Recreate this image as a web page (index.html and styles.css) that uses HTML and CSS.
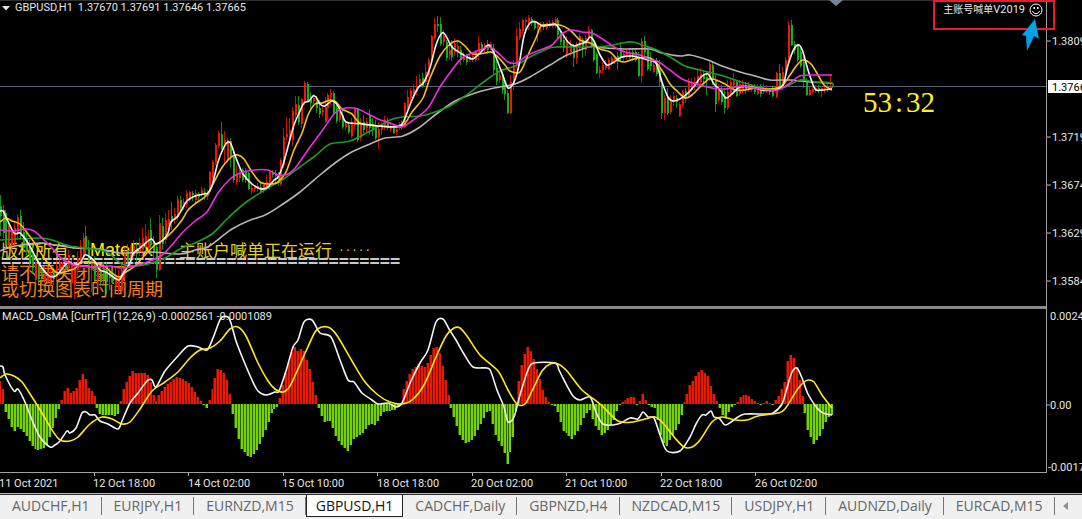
FILE: index.html
```html
<!DOCTYPE html>
<html lang="zh-CN">
<head>
<meta charset="utf-8">
<title>GBPUSD,H1</title>
<link rel="stylesheet" href="styles.css">
</head>
<body>
<div class="terminal">
  <main class="charts">
    <section class="panel panel-price">
      <svg class="plot" id="price-plot" aria-label="GBPUSD H1">
        <path class="shift-marker" d="M829 0H843L836 6Z"/>
      </svg>
      <h1 class="caption caption-price"><svg class="caret" viewBox="0 0 8 5"><path d="M0 0H8L4 4.500Z"/></svg><span>GBPUSD,H1</span><span>1.37670 1.37691 1.37646 1.37665</span></h1>
      <div class="notice">
        <p class="notice-owner"><span>版权所有：</span><b>MateFX</b><span>主账户喊单正在运行</span><span class="dots">·····</span></p>
        <p class="notice-rule">=======================================</p>
        <p class="notice-warn">请不要关闭窗口</p>
        <p class="notice-warn">或切换图表时间周期</p>
      </div>
      <p class="countdown">53<span class="colon">:</span>32</p>
    </section>
    <svg class="scale scale-price">
      <path class="tick" d="M0 41H4M0 137H4M0 185H4M0 233H4M0 281H4"/>
      <rect class="price-tag" x="1" y="80" width="60" height="13"/>
      <text x="5" y="45">1.38090</text>
      <text class="price-now" x="5" y="91">1.37665</text>
      <text x="5" y="141">1.37190</text>
      <text x="5" y="189">1.36740</text>
      <text x="5" y="237">1.36290</text>
      <text x="5" y="285">1.35840</text>
    </svg>
    <div class="divider"></div>
    <div class="divider-end"></div>
    <section class="panel panel-macd">
      <svg class="plot" id="macd-plot" aria-label="MACD"></svg>
      <h2 class="caption caption-macd">MACD_OsMA [CurrTF] (12,26,9) -0.0002561 -0.0001089</h2>
    </section>
    <svg class="scale scale-macd">
      <path class="tick" d="M0 96H3"/>
      <text x="3" y="11">0.002453</text>
      <text x="3" y="100">0.00</text>
      <text x="1" y="162">-0.001731</text>
    </svg>
    <svg class="timeline">
      <path class="tick" d="M94.500 0V3M188.500 0V3M283.500 0V3M377.500 0V3M472.500 0V3M566.500 0V3M661.500 0V3M755.500 0V3"/>
      <text x="-1" y="14">11 Oct 2021</text>
      <text x="93" y="14">12 Oct 18:00</text>
      <text x="188" y="14">14 Oct 02:00</text>
      <text x="282" y="14">15 Oct 10:00</text>
      <text x="377" y="14">18 Oct 18:00</text>
      <text x="471" y="14">20 Oct 02:00</text>
      <text x="565" y="14">21 Oct 10:00</text>
      <text x="660" y="14">22 Oct 18:00</text>
      <text x="755" y="14">26 Oct 02:00</text>
    </svg>
    <div class="expert">
      <span><span class="expert-name">主账号喊单</span>V2019</span>
      <svg class="smiley" viewBox="0 0 14 14"><circle cx="7" cy="7" r="6"/><path d="M3.500 8C4.500 11.500 9.500 11.500 10.500 8"/><path class="eyes" d="M4.500 4H6V6H4.500ZM8 4H9.500V6H8Z"/></svg>
    </div>
    <svg class="pointer" viewBox="0 0 18 33"><path d="M13 0L17 20L12 17L5 32L4 17L0 16Z"/></svg>
  </main>
  <nav class="tabs">
    <button class="tab">AUDCHF,H1</button>
    <button class="tab">EURJPY,H1</button>
    <button class="tab">EURNZD,M15</button>
    <button class="tab tab-active">GBPUSD,H1</button>
    <button class="tab">CADCHF,Daily</button>
    <button class="tab">GBPNZD,H4</button>
    <button class="tab">NZDCAD,M15</button>
    <button class="tab">USDJPY,H1</button>
    <button class="tab">AUDNZD,Daily</button>
    <button class="tab">EURCAD,M15</button>
    <button class="tab-scroll" aria-label="Scroll tabs left"><svg viewBox="0 0 5 8"><path d="M5 0V8L0 4Z"/></svg></button>
  </nav>
</div>
<script src="chart.js"></script>
</body>
</html>
```
FILE: styles.css
```css
* { box-sizing: border-box; }

body {
  margin: 0;
  background: #000;
  color: #e6e6e6;
  font: 11px/14px Roboto, "Noto Sans CJK SC", sans-serif;
}

h1, h2, p { margin: 0; font-weight: 400; }

.terminal {
  display: flex;
  flex-direction: column;
  height: 100vh;
  overflow: hidden;
}

.charts {
  position: relative;
  flex: 1;
  min-height: 0;
  display: grid;
  grid-template-columns: minmax(0, 1fr) 36px;
  grid-template-rows: minmax(0, 306fr) 3px minmax(0, 164fr) 20px;
  border-bottom: 1px solid #b4b4b4;
}

.panel { position: relative; overflow: hidden; }
.panel-price { box-shadow: inset 0 1px 0 #303030; }
.panel-macd { border-bottom: 1px solid #a0a0a0; }

.plot { display: block; position: relative; z-index: 1; width: 100%; height: 100%; }

.scale {
  display: block;
  width: 100%;
  height: 100%;
  overflow: hidden;
  border-left: 1px solid #a0a0a0;
}

.divider { background: #8c878c; }
.divider-end { border-left: 1px solid #a0a0a0; }

.timeline { grid-column: 1 / -1; width: 100%; height: 20px; }

text { fill: #e6e6e6; }
.tick { stroke: #b4b4b4; fill: none; }
.price-tag { fill: #fff; }
.price-now { fill: #000; }
.shift-marker { fill: #76869a; }

.caption {
  position: absolute;
  left: 2px;
  font-size: 11px;
  line-height: 14px;
  white-space: pre;
}
.caption-price { top: 1px; display: flex; align-items: center; gap: 5px; }
.caption-macd { top: 1px; }
.caret { width: 8px; height: 5px; fill: #e6e6e6; }

.notice {
  position: absolute;
  left: 1px;
  bottom: 10px;
  font: 17px/16px "Noto Sans CJK SC", sans-serif;
  font-weight: 300;
  white-space: nowrap;
}
.notice-owner { display: flex; align-items: center; color: #e8d020; }
.notice-owner b {
  margin: 0 26px 0 4px;
  font: 18px/16px "Liberation Sans", Arial, sans-serif;
  color: #ffee00;
}
.dots { margin-left: 6px; font: 11px/16px "Liberation Mono", monospace; }
.notice-rule {
  height: 6px;
  font: bold 17px/6px "DejaVu Sans Mono", monospace;
  color: #c8c8c8;
}
.notice-warn { color: #f08020; font-size: 18px; }

.countdown {
  position: absolute;
  left: 863px;
  top: 86px;
  font: 29px/32px "Liberation Serif", serif;
  color: #ffee22;
}
.colon { display: inline-block; width: 14px; text-align: center; }

.expert {
  position: absolute;
  top: 0;
  right: 27px;
  display: flex;
  align-items: flex-start;
  gap: 4px;
  height: 30px;
  padding: 1px 10px 0 8px;
  border: 2px solid #ed1c24;
}
.expert-name { font-size: 10px; }
.smiley { width: 14px; height: 14px; fill: none; stroke: #fff; }
.smiley .eyes { fill: #fff; stroke: none; }

.pointer { position: absolute; right: 42px; top: 19px; width: 18px; height: 33px; fill: #00a2e8; }

.tabs {
  display: flex;
  height: 25px;
  padding-bottom: 2px;
  background: #f0f0f0;
  border-top: 1px solid #303030;
  overflow: hidden;
}
.tab, .tab-scroll {
  position: relative;
  flex: none;
  margin: 0;
  border: 0;
  padding: 0 12px;
  background: none;
  color: #666;
  font: 14px/20px "Open Sans", sans-serif;
}
.tab::after {
  content: "";
  position: absolute;
  right: 0;
  top: 2px;
  width: 1px;
  height: 18px;
  background: #777;
}
.tab-active { background: #fff; color: #111; border: 1px solid #222; border-top: 0; padding: 0 9px; }
.tab-active::after { display: none; }
.tab-scroll { padding: 0 8px; }
.tab-scroll svg { display: block; width: 5px; height: 8px; fill: #909090; }

.level { stroke: #56637a; }
.candle-up { stroke: #f01800; fill: #f01800; }
.candle-down { stroke: #18b018; fill: #18b018; }
.body { stroke: none; }
.wick { stroke-width: 1; opacity: 0.8; }
.bar-up { fill: #e81a00; }
.bar-down { fill: #76d200; }
.gap-up { fill: #7c0c00; }
.gap-down { fill: #2c6400; }
.line { fill: none; stroke-width: 1.6; stroke-linejoin: round; }
.line-fast { stroke: #f4f4f4; }
.line-gold { stroke: #f8c018; }
.line-magenta { stroke: #f02ce0; }
.line-green { stroke: #229a22; }
.line-silver { stroke: #b8b4b4; }
.line-signal { stroke: #ffe818; }
```
FILE: chart.js
```javascript
const NS = "http://www.w3.org/2000/svg";

function add(parent, name, attrs) {
  const el = document.createElementNS(NS, name);
  for (const key in attrs) el.setAttribute(key, attrs[key]);
  parent.appendChild(el);
}

// Smooth curve through a list of "x,y" points.
function curve(parent, cls, text) {
  const p = text.trim().split(/\s+/).map(s => s.split(",").map(Number));
  let d = "M" + p[0].join(" ");
  for (let i = 1; i < p.length; i++) {
    const a = p[Math.max(i - 2, 0)], b = p[i - 1], c = p[i], e = p[Math.min(i + 1, p.length - 1)];
    d += `C${b[0] + (c[0] - a[0]) / 7} ${b[1] + (c[1] - a[1]) / 7} ${c[0] - (e[0] - b[0]) / 7} ${c[1] - (e[1] - b[1]) / 7} ${c[0]} ${c[1]}`;
  }
  add(parent, "path", { class: "line " + cls, d });
}

const price = document.getElementById("price-plot");
add(price, "path", { class: "level", d: "M0 86.5H4000" });

// x, high, body top, body bottom, low; "g" marks a falling bar.
const candles = `0,195,206,216,236g 3,205,210,233,238g 5,210,213,245,248g 8,223,226,245,249 11,228,231,245,250 14,222,228,243,246 17,214,217,233,240 20,210,216,236,240g 23,222,232,248,252g 26,232,238,250,255g 29,240,247,262,268g 32,245,255,268,274g 35,255,262,280,283 38,258,265,279,284g 41,265,270,276,285g 44,266,270,280,283 47,268,272,282,284 50,270,274,280,286 53,268,272,279,285g 56,260,266,277,280 59,258,262,272,276 62,262,265,270,274 65,258,262,270,276g 68,250,255,268,272 71,260,265,283,290 74,265,270,285,299 77,252,258,270,276 80,240,246,262,268 83,233,238,255,260 85,226,236,247,255g 88,240,250,262,268g 91,255,258,270,292 94,256,262,275,280g 97,262,268,280,288 100,265,270,282,286g 103,262,270,280,284g 106,262,270,282,294g 109,268,272,278,290g 112,270,276,281,284g 115,268,275,286,290 118,270,278,290,294 121,262,270,291,294 124,248,255,272,280 127,244,250,262,266g 130,245,252,260,266 133,240,246,256,260 136,242,248,254,262g 139,238,243,252,256 142,228,238,250,256 145,224,236,246,252 148,230,240,248,254 150,218,230,245,255g 153,236,242,252,258g 156,244,247,270,278g 159,215,223,270,271 162,218,226,244,250g 165,213,220,240,244 168,210,219,226,232 171,202,216,222,230g 174,208,214,220,224 177,196,199,217,221 180,196,200,208,212g 183,198,202,207,210 186,190,193,204,208 189,191,192,200,202 192,191,193,195,201g 195,190,193,200,203 198,192,194,197,200g 201,187,190,194,197 204,188,192,196,200g 207,190,193,196,200 209,171,172,192,195 212,160,162,178,180 215,143,145,163,165 218,131,133,146,148 221,122,134,149,150g 224,131,140,144,165 227,138,140,160,162 230,138,141,157,167g 233,148,157,180,183g 236,165,174,182,185 239,168,173,178,182 242,168,170,180,182g 245,168,172,180,183g 248,172,173,189,190g 251,182,188,191,194 254,185,187,189,192 257,183,186,189,192 260,182,187,193,194g 263,183,184,190,193 266,175,182,187,190 269,170,172,185,190 272,170,172,175,178g 275,170,173,176,185g 278,172,176,183,186g 280,158,160,184,186 283,128,137,165,168 286,117,134,137,140 289,118,130,138,142 292,107,111,140,146 295,96,104,115,118 298,96,105,122,125g 301,98,99,124,128 304,81,83,103,105 307,82,84,100,102g 310,92,97,103,110g 313,94,98,101,104 316,96,101,108,113g 319,100,108,114,118g 322,105,110,112,116 325,97,107,122,123 327,93,95,108,120 330,89,93,97,105 333,91,93,113,115g 336,105,108,121,123g 339,110,112,120,122 342,108,115,127,129g 345,122,124,127,130 348,122,125,132,134g 351,118,122,136,138 354,107,108,125,130 357,108,109,140,142g 360,118,124,138,141 363,115,122,130,134g 366,118,122,128,132 369,109,115,128,135g 372,118,124,130,136g 375,120,126,138,140g 378,122,129,137,149 381,122,125,130,135 384,116,120,127,130 387,118,123,127,130g 390,122,126,129,132 393,124,128,133,134g 396,126,129,132,135 399,122,125,128,130 401,120,122,127,130 404,102,103,125,128 407,90,97,107,112 410,88,91,98,105 413,84,89,94,97 416,76,86,92,95 419,74,79,84,87 422,73,78,86,88g 425,64,72,82,85 428,58,60,75,78 431,35,36,60,62 434,18,24,38,40 437,16,24,26,32g 440,17,24,44,46g 443,30,36,42,46 446,40,42,58,61g 449,45,50,55,60 451,40,45,57,61g 454,38,44,52,56 457,40,46,51,58 460,46,50,60,65g 463,52,56,60,62 466,54,58,62,65g 469,55,57,60,62 472,52,56,60,62 475,50,52,60,62 478,36,43,52,60 481,42,44,50,52g 484,43,45,49,52 487,40,45,50,54g 490,42,44,48,50 493,44,48,70,74g 496,60,68,81,85g 499,72,75,80,83 502,70,74,90,94g 504,80,86,94,100g 507,90,93,113,114g 510,75,82,113,114 513,60,65,85,90 516,28,36,65,68 519,22,29,38,40 522,19,20,31,34 525,18,20,22,30 528,15,18,24,30 531,17,19,22,26g 534,20,22,28,30g 537,22,24,28,42 540,22,25,27,32 543,22,24,27,30g 546,22,23,28,30 549,20,23,26,28 552,20,22,26,28 555,17,19,24,28 557,18,20,35,38g 560,30,34,42,45g 563,35,40,48,52g 566,36,42,54,58 570,40,44,52,56 573,44,48,58,67g 576,42,46,58,64 579,33,36,46,50 582,38,40,48,58g 585,35,38,50,56 588,26,30,38,42 591,29,30,45,48g 593,40,43,60,62g 596,52,54,73,74g 599,66,70,73,78 602,62,65,70,73 605,60,64,68,70 608,58,60,69,70 611,56,58,63,66 614,56,58,61,64 617,52,56,62,70g 620,42,48,58,62g 623,50,54,58,61 626,50,53,56,60 629,48,54,58,60 632,48,52,57,61g 635,50,52,60,62g 638,52,57,76,77g 641,38,41,76,83 644,36,41,52,58g 647,46,50,69,71g 650,52,60,66,71g 653,60,65,72,73 656,58,63,74,76g 659,60,68,82,86g 661,78,84,113,119g 664,95,98,113,120 667,88,98,113,115g 670,95,102,112,114 673,92,96,102,106 676,95,98,102,108g 679,102,104,116,117 682,90,92,105,107 685,88,91,98,103g 688,78,82,95,98 691,78,82,90,92 694,77,82,87,90 697,70,76,84,88 700,68,74,82,86 703,70,74,79,84g 706,72,77,80,95g 709,60,64,78,81 712,61,65,80,85g 715,75,81,104,112g 718,84,88,100,103 721,85,90,102,105g 724,88,96,108,114g 727,80,92,108,110 730,78,82,95,97 733,73,81,85,92 736,80,82,96,97g 739,80,84,94,96 742,80,84,90,93 745,82,85,89,94g 748,82,85,90,92 751,84,87,90,92 754,84,87,92,94g 757,84,88,94,95 760,84,90,94,97g 763,83,88,92,94 766,85,88,91,93 769,88,90,92,95g 772,86,90,96,97g 776,72,73,97,98 779,64,73,88,90g 782,67,72,88,90 785,57,60,72,75 788,21,25,60,62 791,20,25,45,46g 794,41,44,50,54g 797,44,46,60,62g 800,48,52,66,68g 803,56,62,82,88g 806,78,82,95,96g 809,86,90,95,96 812,87,89,92,94 815,85,88,91,93 818,85,88,90,93g 821,86,88,91,97 824,85,88,90,93 827,84,87,90,92 830,75,86,89,90`;

for (const item of candles.split(" ")) {
  const [x, high, top, bottom, low] = item.split(",").map(parseFloat);
  const cls = item.endsWith("g") ? "candle-down" : "candle-up";
  add(price, "path", { class: cls + " wick", d: `M${x + .5} ${high}V${low}` });
  add(price, "rect", { class: cls + " body", x, y: top, width: 2, height: Math.max(bottom - top, 1) });
}

curve(price, "line-silver", "0,251 15,246 40,243 55,245 75,248 100,249 120,253 150,252 180,254 195,250 208,247 220,238 232,229 248,221 265,215 280,206 300,192 320,175 335,163 350,153 370,144 385,138 403,136 420,127 435,115 455,101 475,93 490,89 505,86 515,84 530,77 550,65 565,56 580,50 593,46 605,48 625,49 650,49 662,53 680,56 690,55 708,60 722,66 740,72 755,76 770,80 790,80 810,82 832,83");
curve(price, "line-green", "0,240 40,238 55,241 70,246 100,250 110,254 122,264 135,266 148,264 165,258 180,249 195,243 212,234 228,218 245,203 268,188 285,178 300,167 315,156 330,144 350,141 372,130 390,120 402,117 420,116 432,113 450,106 468,94 485,81 500,71 515,66 530,57 545,50 555,47 590,47 608,46 622,43 633,42 645,46 657,50 670,57 685,66 700,70 720,75 738,81 755,86 770,89 785,87 800,80 815,82 832,83 832,88");
curve(price, "line-gold", "0,222 6,218 12,221 20,224 28,234 36,245 44,258 52,268 58,273 74,269 80,263 90,262 104,266 112,273 119,277 126,272 135,266 144,256 155,245 163,240 172,232 182,220 188,210 196,203 206,196 212,186 221,169 228,160 233,156 238,155 244,159 252,172 260,182 270,184 278,182 286,172 294,150 302,133 308,115 315,104 322,103 330,100 336,102 342,109 352,114 360,123 380,126 402,126 412,112 423,98 430,78 440,56 450,44 458,41 465,46 473,54 485,53 491,52 498,57 505,65 510,71 520,72 528,55 536,38 541,26 550,25 560,25 570,30 580,40 590,43 600,49 610,52 618,60 624,62 634,59 645,57 655,61 663,72 670,84 678,92 685,98 692,95 700,87 709,79 716,80 725,84 735,90 745,90 755,88 770,89 782,86 790,75 797,65 803,60 811,64 818,75 824,85 832,90");
curve(price, "line-fast", "0,211 3,211 6,217 14,233 20,233 26,240 32,250 36,258 42,268 48,275 53,277 58,274 68,262 74,265 80,263 85,255 90,257 96,263 100,270 106,272 112,276 119,280 124,272 130,263 133,254 140,248 151,239 156,244 163,240 168,233 171,222 178,216 187,201 195,196 204,194 208,193 212,186 218,162 224,147 228,142 231,144 236,158 243,174 252,184 261,189 268,187 274,180 278,177 283,165 289,143 294,125 300,111 304,103 309,101 313,96 316,97 320,104 325,106 332,101 338,106 345,121 350,123 362,124 378,126 390,127 401,125 405,118 412,100 418,88 424,82 430,68 436,45 442,33 446,36 452,47 462,54 472,59 478,55 484,49 489,45 495,55 502,73 508,88 514,82 519,65 524,36 530,23 536,22 543,26 555,24 560,30 568,42 574,46 580,44 586,42 590,37 594,41 600,55 607,65 614,62 622,57 632,56 641,58 648,60 656,63 662,82 668,97 673,101 680,99 688,93 695,85 701,77 708,74 714,84 720,90 726,98 732,94 740,87 752,87 762,90 775,90 783,85 788,65 794,49 799,45 803,52 808,70 815,89 822,90 832,89");
curve(price, "line-magenta", "0,230 12,231 26,229 34,231 42,238 52,248 62,259 74,265 92,267 110,266 120,268 135,266 150,261 162,255 172,245 182,233 195,221 207,212 218,193 230,179 240,173 254,170 268,170 278,175 288,174 296,167 310,147 322,131 335,113 346,108 358,109 368,114 378,119 390,123 402,127 412,121 428,108 440,87 452,70 462,58 475,52 489,47 498,53 508,62 516,63 528,55 540,50 552,45 563,33 572,30 582,32 592,33 604,40 614,47 625,52 640,55 650,60 657,61 670,70 682,79 700,85 712,88 725,89 742,86 760,89 778,90 790,83 800,76 815,75 832,75");

const macd = document.getElementById("macd-plot");
const ZERO = 95;
const histogram = "-1,26 3,15 5,-5 8,-13 11,-20 14,-29 17,-22 22,-26 28,-34 34,-45 39,-46 46,-44 52,-28 58,-8 61,0 64,11 67,18 70,11 76,14 79,21 82,31 85,27 88,17 94,11 96,0 99,-9 103,-11 114,-11 117,-13 120,-4 122,10 126,20 132,33 136,31 147,31 152,18 155,0 159,8 166,18 177,27 183,25 190,20 197,8 203,0 206,-5 209,2 215,24 218,35 222,34 226,29 230,12 232,-4 236,-24 242,-45 250,-54 256,-48 262,-35 268,-20 273,-5 277,-4 280,5 288,38 294,58 298,53 303,56 310,35 315,12 318,-2 324,-18 330,-16 337,-33 343,-42 348,-47 354,-35 362,-30 370,-20 375,-21 383,-8 395,-6 401,0 405,18 412,34 419,40 426,36 433,55 436,58 440,50 447,17 450,0 454,-12 461,-33 466,-39 473,-36 480,-22 487,-8 490,-7 495,-30 502,-43 505,-50 507,-62 510,-50 514,-30 517,0 520,30 525,50 528,57 532,52 538,32 544,10 550,0 556,-3 563,-26 572,-35 578,-28 586,-10 590,-6 595,-20 602,-31 608,-26 614,-15 618,-3 625,4 634,8 638,-3 643,10 648,0 656,-5 661,-32 666,-44 672,-32 680,-18 684,0 690,18 698,31 702,34 708,28 713,12 718,0 725,-16 731,-4 736,0 742,9 748,9 754,3 762,0 767,3 773,0 780,10 786,25 788,46 792,50 796,40 800,22 804,0 808,-25 814,-40 820,-32 828,-14 832,-11"
  .split(" ").map(s => s.split(",").map(Number));

for (let k = 282; k >= 0; k--) {
  const x = 832 - k * 94.4 / 32;
  let i = 1;
  while (i < histogram.length - 1 && histogram[i][0] < x) i++;
  const [x0, h0] = histogram[i - 1], [x1, h1] = histogram[i];
  const value = Math.round(h0 + (h1 - h0) * (x - x0) / (x1 - x0));
  const height = Math.max(Math.abs(value), 1);
  const left = Math.round(x) - 1;
  const y = value > 0 ? ZERO - height : ZERO;
  const side = value > 0 ? "up" : "down";
  add(macd, "rect", { class: "gap-" + side, x: left - 1, y, width: 1, height });
  add(macd, "rect", { class: "bar-" + side, x: left, y, width: 2, height });
}

// The oscillator curves are listed in window coordinates.
const group = document.createElementNS(NS, "g");
group.setAttribute("transform", "translate(0 -309)");
macd.appendChild(group);
curve(group, "line-fast", "0,366 3,367 5,375 14,391 18,389 25,402 32,420 40,437 50,447 55,445 60,441 67,431 70,433 76,428 82,413 86,412 90,415 95,415 100,421 108,424 118,429 122,421 130,403 138,393 147,381 152,380 156,387 165,371 178,356 188,346 198,347 207,350 213,338 219,322 222,317 228,317 231,323 236,341 243,359 252,380 258,391 266,395 275,392 279,391 286,371 293,347 298,340 304,322 312,320 320,333 331,337 340,360 348,380 354,382 362,393 372,400 378,404 388,403 396,407 402,403 411,381 420,363 428,350 436,322 443,319 449,329 456,340 464,354 473,367 487,368 491,372 497,390 504,407 508,422 514,417 520,395 528,370 534,363 555,363 559,370 564,380 573,396 580,400 590,397 596,412 603,424 618,424 630,418 638,419 643,412 648,417 654,418 660,435 667,451 680,451 690,437 696,424 702,415 706,415 711,411 714,417 719,418 725,425 731,422 738,417 745,414 765,414 773,413 782,404 787,388 792,372 797,368 802,378 808,394 817,408 823,413 832,415");
curve(group, "line-signal", "0,378 6,374 14,376 22,382 32,397 42,413 52,430 60,440 70,441 78,437 90,424 102,417 112,419 122,424 130,422 140,409 152,391 165,382 178,372 190,358 200,350 210,348 220,341 230,329 238,327 246,336 258,363 268,381 275,389 283,392 290,386 302,360 315,332 322,327 330,328 338,337 352,361 365,382 378,395 390,402 402,404 412,400 424,385 436,357 446,336 454,328 460,328 467,336 480,355 498,371 508,390 517,404 525,404 532,391 542,371 550,364 558,364 567,371 582,390 600,404 618,421 633,422 645,419 655,417 663,423 675,438 684,447 692,447 700,440 712,422 722,417 735,420 747,420 758,416 778,413 785,409 797,390 803,383 808,380 814,382 822,395 832,408");
```
